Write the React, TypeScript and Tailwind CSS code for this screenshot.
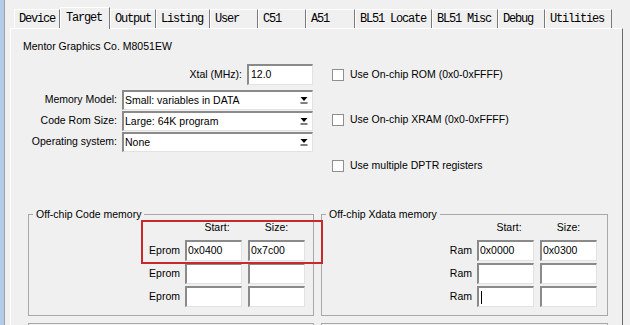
import React from 'react';

const tabs: { label: string; w: string; active?: boolean }[] = [
  { label: 'Device', w: 'w-[46px]' },
  { label: 'Target', w: 'w-[50px]', active: true },
  { label: 'Output', w: 'w-[46px]' },
  { label: 'Listing', w: 'w-[54px]' },
  { label: 'User', w: 'w-[48px]' },
  { label: 'C51', w: 'w-[48px]' },
  { label: 'A51', w: 'w-[49px]' },
  { label: 'BL51 Locate', w: 'w-[77px]' },
  { label: 'BL51 Misc', w: 'w-[66px]' },
  { label: 'Debug', w: 'w-[47px]' },
  { label: 'Utilities', w: 'w-[67px]' },
];

const sunken =
  'flex items-center bg-white border-t-2 border-l-2 border-r border-b border-t-[#8a8a8a] border-l-[#8a8a8a] border-r-[#e2e2e2] border-b-[#e2e2e2]';

const Field: React.FC<{ className: string; value?: string; cursor?: boolean }> = ({
  className,
  value,
  cursor,
}) => (
  <div className={`${sunken} ${className} pl-[1px]`}>
    {cursor && <span className="ml-[1px] h-[13px] w-[1px] bg-black" />}
    {value}
  </div>
);

const Select: React.FC<{ value: string }> = ({ value }) => (
  <div className={`${sunken} h-[20px] w-[191px] justify-between pl-[1px]`}>
    <span>{value}</span>
    <div className="flex h-full w-[16px] items-center justify-center">
      <svg width="8" height="7" viewBox="0 0 8 7">
        <polygon points="0.5,0 7.5,0 4,4" fill="#000" />
        <rect x="0.5" y="5.5" width="7" height="1" fill="#000" />
      </svg>
    </div>
  </div>
);

const Check: React.FC<{ label: string; className: string }> = ({ label, className }) => (
  <div className={`flex h-[21px] items-center gap-[6px] ${className}`}>
    <div className="h-[12px] w-[12px] border border-[#8e8f8f] bg-white" />
    <span>{label}</span>
  </div>
);

const MemRow: React.FC<{ label: string; start?: string; size?: string; cursor?: boolean; pr: string }> = ({
  label,
  start,
  size,
  cursor,
  pr,
}) => (
  <div className={`flex h-[21px] items-center justify-end ${pr}`}>
    <span className="mr-[5px]">{label}</span>
    <Field className="h-[21px] w-[57px]" value={start} cursor={cursor} />
    <Field className="ml-[6px] h-[21px] w-[57px]" value={size} />
  </div>
);

const Group: React.FC<{ title: string; w: string; label: string; pr: string; first: [string, string]; cursor?: boolean }> = ({
  title,
  w,
  label,
  pr,
  first,
  cursor,
}) => (
  <fieldset className={`h-[108px] ${w} border border-[#a8a8a8]`}>
    <legend className="ml-[4px] px-[3px] leading-[13px]">{title}</legend>
    <div className={`flex justify-end leading-[13px] ${pr}`}>
      <span className="w-[57px] pl-[7px] text-center">Start:</span>
      <span className="ml-[6px] w-[57px] text-center">Size:</span>
    </div>
    <div className="mt-[6px] flex flex-col gap-[2px]">
      <MemRow label={label} start={first[0]} size={first[1]} pr={pr} />
      <MemRow label={label} pr={pr} />
      <MemRow label={label} pr={pr} cursor={cursor} />
    </div>
  </fieldset>
);

export default function App() {
  return (
    <div className="relative flex h-[325px] w-[630px] overflow-hidden bg-[#f0f0f0] font-['Liberation_Sans',Arial,sans-serif] text-[10.5px] text-black">
      <div className="w-[4px] bg-[#b4cbe9]" />
      <div className="w-[1px] bg-[#98a2ad]" />
      <div className="flex flex-1 flex-col pt-[7px]">
        <div className="ml-[9px] flex h-[21px] items-end font-['Liberation_Mono',monospace] text-[12px] tracking-[-1.2px]">
          {tabs.map((t) =>
            t.active ? (
              <div
                key={t.label}
                className={`relative z-10 -mb-[1px] flex h-[22px] ${t.w} items-center border-l border-t border-r border-l-white border-t-white border-r-[#7a7a7a] bg-[#f0f0f0] pb-[2px] pl-[5px]`}
              >
                {t.label}
              </div>
            ) : (
              <div
                key={t.label}
                className={`flex h-[19px] ${t.w} items-center border-l border-t border-r border-l-white border-t-white border-r-[#7a7a7a] pl-[4px]`}
              >
                {t.label}
              </div>
            ),
          )}
        </div>
        <div className="ml-[5px] w-[613px] flex-1 border-l border-t border-r border-l-white border-t-white border-r-[#6a6a6a]">
          <div className="pl-[12px] pt-[11px] leading-[13px]">Mentor Graphics Co. M8051EW</div>
          <div className="mt-[11px] flex h-[144px]">
            <div className="flex w-[302px] flex-col items-end">
              <div className="flex h-[21px] items-center gap-[5px]">
                <span>Xtal (MHz):</span>
                <Field className="h-[21px] w-[66px] pl-[2px]" value="12.0" />
              </div>
              <div className="mt-[5px] flex flex-col gap-[1px]">
                <div className="flex items-center justify-end gap-[5px]">
                  <span>Memory Model:</span>
                  <Select value="Small: variables in DATA" />
                </div>
                <div className="flex items-center justify-end gap-[5px]">
                  <span>Code Rom Size:</span>
                  <Select value="Large: 64K program" />
                </div>
                <div className="flex items-center justify-end gap-[5px]">
                  <span>Operating system:</span>
                  <Select value="None" />
                </div>
              </div>
            </div>
            <div className="ml-[19px] flex flex-col">
              <Check label="Use On-chip ROM (0x0-0xFFFF)" className="" />
              <Check label="Use On-chip XRAM (0x0-0xFFFF)" className="mt-[24px]" />
              <Check label="Use multiple DPTR registers" className="mt-[25px]" />
            </div>
          </div>
          <div className="ml-[17px] flex gap-[7px]">
            <Group title="Off-chip Code memory" w="w-[286px]" label="Eprom" pr="pr-[8px]" first={['0x0400', '0x7c00']} />
            <Group title="Off-chip Xdata memory" w="w-[287px]" label="Ram" pr="pr-[10px]" first={['0x0000', '0x0300']} cursor />
          </div>
          <div className="ml-[17px] mt-[7px] flex gap-[7px]">
            <div className="h-[20px] w-[286px] border-l border-t border-r border-[#a8a8a8]" />
            <div className="h-[20px] w-[287px] border-l border-t border-r border-[#a8a8a8]" />
          </div>
        </div>
      </div>
      <div className="absolute left-[141px] top-[220px] h-[44px] w-[182px] border-2 border-[#c62a2a]" />
    </div>
  );
}
